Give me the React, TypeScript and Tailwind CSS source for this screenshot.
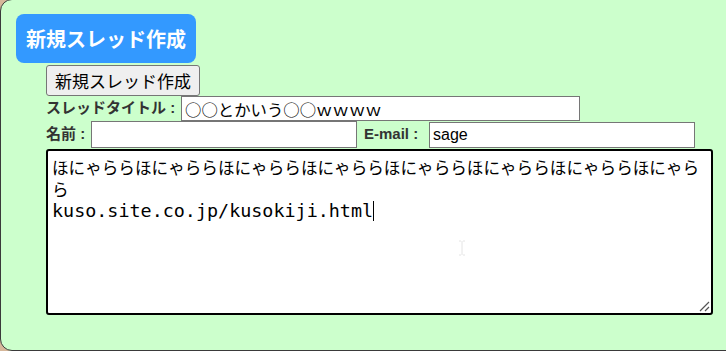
import React from "react"

const sans = { fontFamily: '"Liberation Sans", "Noto Sans CJK JP", sans-serif' }

function ThreadForm() {
  return (
    <div className="ml-[30px] mt-[2px]">
      {/* button */}
      <button className="h-[31px] px-[8px] text-[17px] leading-none text-black bg-[#efefef] border border-[#767676] rounded-[3px] font-['Noto_Sans_CJK_JP',sans-serif]">
        新規スレッド作成
      </button>

      {/* title row */}
      <div className="flex items-center h-[25px]">
        <div className="w-[135px] text-[15px] font-bold text-[#333]">スレッドタイトル :</div>
        <input
          readOnly
          value="○○とかいう○○ｗｗｗｗ"
          className="w-[399px] h-[25px] border border-[#767676] bg-white pl-[3px] text-[16.4px] text-black outline-none font-['Noto_Sans_CJK_JP',sans-serif]"
        />
      </div>

      {/* name / mail row */}
      <div className="flex items-start h-[28px]">
        <div className="w-[45px] h-[27px] flex items-center text-[15px] font-bold text-[#333]">名前 :</div>
        <input readOnly value="" className="w-[266px] h-[27px] border border-[#767676] bg-white outline-none" />
        <div className="w-[72px] h-[27px] flex items-center pl-[7px] text-[15px] font-bold text-[#333]">E-mail :</div>
        <input
          readOnly
          value="sage"
          className="w-[266px] h-[26px] mt-px border border-[#767676] bg-white pl-[3px] text-[16px] text-black outline-none"
        />
      </div>

      {/* body */}
      <div className="relative w-[667px] h-[166px] border-2 border-black rounded-[3px] bg-white px-[4px] pt-[5px] text-black">
        <div className="text-[16.6px] leading-[22px] font-['Noto_Sans_CJK_JP',sans-serif]">
          ほにゃららほにゃららほにゃららほにゃららほにゃららほにゃららほにゃららほにゃら
          <br />ら
        </div>
        <div className="flex items-center h-[22px] text-[18.4px] font-['DejaVu_Sans_Mono',monospace]">
          kuso.site.co.jp/kusokiji.html
          <span className="inline-block w-px h-[20px] bg-black" />
        </div>
        {/* mouse cursor */}
        <svg className="absolute left-[410px] top-[89px]" width="8" height="16" viewBox="0 0 8 16">
          <path d="M1 1h2M5 1h2M4 1v14M1 15h2M5 15h2" stroke="#e4e4e4" strokeWidth="1" fill="none" />
        </svg>
        {/* resize grip */}
        <svg className="absolute right-[1px] bottom-[1px]" width="12" height="12" viewBox="0 0 12 12">
          <path d="M2 11L11 2M7 11L11 7" stroke="#555" strokeWidth="1.2" fill="none" />
        </svg>
      </div>
    </div>
  )
}

export default function App() {
  return (
    <div className="w-[726px] h-[351px] overflow-hidden bg-[#d6b79a]" style={sans}>
      <div className="-mt-px w-[780px] h-[352px] rounded-[12px] border border-[#3a3a3a] bg-[#ccffcc] pl-[15px] pt-[14px]">
        {/* heading */}
        <div className="inline-flex items-center h-[49px] px-[10px] rounded-[8px] bg-[#3399ff] text-white text-[20px] font-bold font-['Noto_Sans_CJK_JP',sans-serif]">
          新規スレッド作成
        </div>
        <ThreadForm />
      </div>
    </div>
  )
}
